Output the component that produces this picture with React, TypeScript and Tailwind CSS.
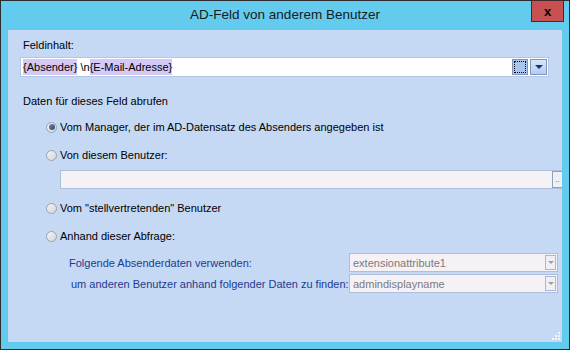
import React from "react";

const font = { fontFamily: '"Liberation Sans", Arial, sans-serif' };

function Radio({ checked }: { checked?: boolean }) {
  return (
    <span className="relative inline-flex h-[11px] w-[11px] shrink-0 items-center justify-center rounded-full border border-[#9aa3ad] bg-gradient-to-br from-[#f4f4f4] to-[#d2d6da]">
      {checked && <span className="h-[6px] w-[6px] rounded-full bg-gradient-to-br from-[#6f86b0] to-[#2e4a7a]" />}
    </span>
  );
}

function RadioRow({ label, checked }: { label: string; checked?: boolean }) {
  return (
    <div className="ml-[38px] flex h-[14px] items-center gap-[3px]">
      <Radio checked={checked} />
      <span className="leading-[14px]">{label}</span>
    </div>
  );
}

function Combo({ value }: { value: string }) {
  return (
    <div className="flex h-[19px] w-[209px] items-center border border-[#aebfdc] bg-[#f6f1f5] pl-[3px]">
      <span className="flex-1 leading-[14px] text-[#7b7b7b]">{value}</span>
      <span className="mr-[1px] flex h-[15px] w-[11px] items-center justify-center border border-[#a9b9d4] bg-[#eef0f4]">
        <span className="h-0 w-0 border-x-[3px] border-t-[3px] border-x-transparent border-t-[#a0a0a0]" />
      </span>
    </div>
  );
}

export default function App() {
  return (
    <div className="h-[350px] w-[570px] bg-[#2d2d30] p-px text-[11px] text-black" style={font}>
      <div className="flex h-full flex-col bg-[#63cbee]">
        {/* title bar */}
        <div className="relative flex h-[29px] shrink-0 items-center justify-center">
          <span className="-mt-[1px] text-[13.5px] text-[#1a1a1a]">AD-Feld von anderem Benutzer</span>
          <div className="absolute right-[5px] -top-px flex h-[22px] w-[33px] items-center justify-center border border-[#45262a] bg-[#c75050]">
            <span className="text-[13px] font-bold leading-none text-black">x</span>
          </div>
        </div>

        {/* client area */}
        <div className="relative mx-[7px] mb-[7px] flex-1 bg-[#c5d9f5] pt-[8px]">
          <div className="ml-[15px] leading-[14px]">Feldinhalt:</div>

          <div className="ml-[12px] mr-[13px] mt-[5px] flex h-[20px] items-center border border-[#b3c6e3] bg-white pl-[2px]">
            <div className="flex flex-1 items-center leading-[16px]">
              <span className="bg-[#d4c8f6]">{"{Absender}"}</span>
              <span>&nbsp;\n</span>
              <span className="bg-[#d4c8f6]">{"{E-Mail-Adresse}"}</span>
            </div>
            <span className="mr-[2px] flex h-[16px] w-[16px] items-center justify-center border border-[#7f95bf] bg-[#a9c6ee]">
              <span className="h-[12px] w-[12px] border border-dotted border-black" />
            </span>
            <span className="mr-[1px] flex h-[16px] w-[17px] items-center justify-center border border-[#7f95bf] bg-gradient-to-b from-[#d6e6fa] to-[#b2cdf2]">
              <span className="h-0 w-0 border-x-[4px] border-t-[4px] border-x-transparent border-t-[#1c2f6e]" />
            </span>
          </div>

          <div className="ml-[15px] mt-[17px] leading-[14px]">Daten für dieses Feld abrufen</div>

          <div className="mt-[12px]">
            <RadioRow checked label="Vom Manager, der im AD-Datensatz des Absenders angegeben ist" />
          </div>
          <div className="mt-[14px]">
            <RadioRow label="Von diesem Benutzer:" />
          </div>

          <div className="ml-[52px] mt-[8px] flex h-[19px] items-center border-y border-l border-[#aebfdc] bg-[#f6f1f5]">
            <span className="flex-1" />
            <span className="flex h-[17px] w-[10px] items-end justify-center border border-r-0 border-[#8ea2c8] bg-[#eef0f6] pb-[3px]">
              <span className="text-[8px] leading-none text-[#666]">..</span>
            </span>
          </div>

          <div className="mt-[12px]">
            <RadioRow label={'Vom "stellvertretenden" Benutzer'} />
          </div>
          <div className="mt-[14px]">
            <RadioRow label="Anhand dieser Abfrage:" />
          </div>

          <div className="mt-[10px] grid grid-cols-[341px_209px] items-center gap-y-[2px] text-[#1d3b8d]">
            <span className="ml-[61px] leading-[14px]">Folgende Absenderdaten verwenden:</span>
            <Combo value="extensionattribute1" />
            <span className="ml-[63px] whitespace-nowrap leading-[14px]">um anderen Benutzer anhand folgender Daten zu finden:</span>
            <Combo value="admindisplayname" />
          </div>

          {/* resize grip */}
          <div className="absolute bottom-[2px] right-[2px] grid grid-cols-3 gap-px">
            <span className="h-[2px] w-[2px]" />
            <span className="h-[2px] w-[2px]" />
            <span className="h-[2px] w-[2px] bg-[#f2f6fb]" />
            <span className="h-[2px] w-[2px]" />
            <span className="h-[2px] w-[2px] bg-[#f2f6fb]" />
            <span className="h-[2px] w-[2px] bg-[#f2f6fb]" />
            <span className="h-[2px] w-[2px] bg-[#f2f6fb]" />
            <span className="h-[2px] w-[2px] bg-[#f2f6fb]" />
            <span className="h-[2px] w-[2px] bg-[#f2f6fb]" />
          </div>
        </div>
      </div>
    </div>
  );
}
